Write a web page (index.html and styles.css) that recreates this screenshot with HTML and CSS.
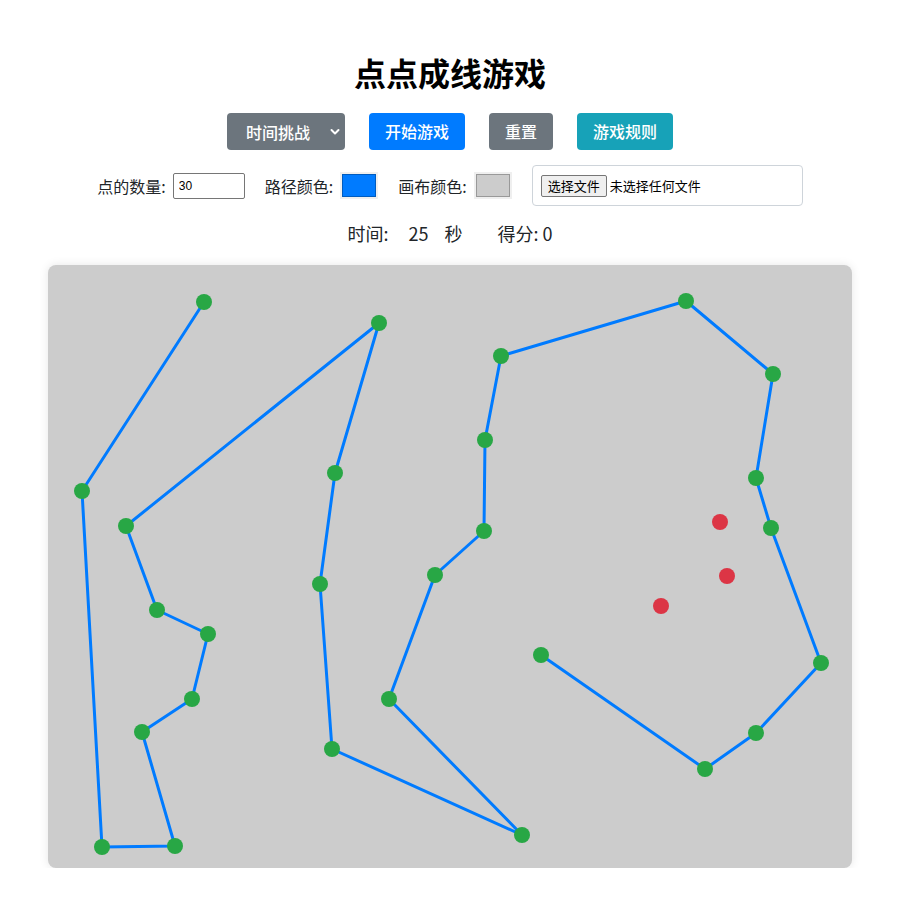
FILE: index.html
```html
<!DOCTYPE html>
<html lang="zh-CN">
<head>
<meta charset="utf-8">
<title>点点成线游戏</title>
<link rel="stylesheet" href="styles.css">
</head>
<body>
<div class="app">
  <h1 class="title">点点成线游戏</h1>
  <div class="toolbar">
    <div class="select-wrap">
      <select class="mode">
        <option>时间挑战</option>
        <option>自由模式</option>
      </select>
      <svg class="chev" width="10" height="8" viewBox="0 0 10 8"><path d="M1.5 2 L5 5.5 L8.5 2" fill="none" stroke="#fff" stroke-width="2" stroke-linecap="round" stroke-linejoin="round"/></svg>
    </div>
    <button class="btn btn-primary">开始游戏</button>
    <button class="btn btn-secondary">重置</button>
    <button class="btn btn-info">游戏规则</button>
  </div>
  <div class="controls">
    <label class="ctl"><span>点的数量:</span><input class="num" type="number" value="30"></label>
    <label class="ctl"><span>路径颜色:</span><input class="color" type="color" value="#007bff"></label>
    <label class="ctl"><span>画布颜色:</span><input class="color" type="color" value="#cccccc"></label>
    <label class="file"><span class="file-btn">选择文件</span><span class="file-name">未选择任何文件</span></label>
  </div>
  <div class="status">
    <span>时间:</span><span class="time">25</span><span class="unit">秒</span><span class="score">得分: 0</span>
  </div>
  <div class="board">
    <svg class="canvas" width="804" height="603" viewBox="0 0 804 603">
      <polyline fill="none" stroke="#007bff" stroke-width="3" stroke-linejoin="round" stroke-linecap="round"
        points="156,37 34,226 54,582 127,581 94,467 144,434 160,369 109,345 78,261 331,58 287,208 272,319 284,484 474,570 341,434 387,310 436,266 437,175 453,91 638,36 725,109 708,213 723,263 773,398 708,468 657,504 493,390"/>
      <g fill="#28a745">
        <circle cx="156" cy="37" r="8"/><circle cx="34" cy="226" r="8"/><circle cx="54" cy="582" r="8"/>
        <circle cx="127" cy="581" r="8"/><circle cx="94" cy="467" r="8"/><circle cx="144" cy="434" r="8"/>
        <circle cx="160" cy="369" r="8"/><circle cx="109" cy="345" r="8"/><circle cx="78" cy="261" r="8"/>
        <circle cx="331" cy="58" r="8"/><circle cx="287" cy="208" r="8"/><circle cx="272" cy="319" r="8"/>
        <circle cx="284" cy="484" r="8"/><circle cx="474" cy="570" r="8"/><circle cx="341" cy="434" r="8"/>
        <circle cx="387" cy="310" r="8"/><circle cx="436" cy="266" r="8"/><circle cx="437" cy="175" r="8"/>
        <circle cx="453" cy="91" r="8"/><circle cx="638" cy="36" r="8"/><circle cx="725" cy="109" r="8"/>
        <circle cx="708" cy="213" r="8"/><circle cx="723" cy="263" r="8"/><circle cx="773" cy="398" r="8"/>
        <circle cx="708" cy="468" r="8"/><circle cx="657" cy="504" r="8"/><circle cx="493" cy="390" r="8"/>
      </g>
      <g fill="#dc3545">
        <circle cx="672" cy="257" r="8"/><circle cx="679" cy="311" r="8"/><circle cx="613" cy="341" r="8"/>
      </g>
    </svg>
  </div>
</div>
</body>
</html>
```
FILE: styles.css
```css
* { box-sizing: border-box; }
body {
  margin: 0;
  background: #fff;
  color: #212529;
  font-family: "Noto Sans CJK SC", "Noto Sans", sans-serif;
}
.app {
  display: flex;
  flex-direction: column;
  align-items: center;
  padding-top: 53px;
}
.title {
  margin: 0;
  font-size: 32px;
  line-height: 38px;
  font-weight: 700;
  color: #000;
}
.toolbar {
  margin-top: 22px;
  display: flex;
  align-items: center;
  gap: 24px;
  height: 37px;
}
.select-wrap {
  position: relative;
  width: 118px;
  height: 37px;
  background: #6c757d;
  border-radius: 4px;
}
.mode {
  appearance: none;
  -webkit-appearance: none;
  width: 100%;
  height: 100%;
  border: none;
  background: transparent;
  color: #fff;
  font-family: inherit;
  font-size: 16px;
  font-weight: 500;
  padding: 0 0 0 19px;
  outline: none;
}
.chev {
  position: absolute;
  right: 5px;
  top: 15px;
  pointer-events: none;
}
.btn {
  height: 37px;
  padding: 0 16px;
  border: none;
  border-radius: 4px;
  color: #fff;
  font-family: inherit;
  font-size: 16px;
  font-weight: 500;
  line-height: 37px;
}
.btn-primary { background: #007bff; }
.btn-secondary { background: #6c757d; }
.btn-info { background: #17a2b8; }
.controls {
  margin-top: 15px;
  display: flex;
  align-items: center;
  height: 41px;
  font-size: 16px;
}
.ctl {
  display: flex;
  align-items: center;
  gap: 7px;
  margin-right: 20px;
  white-space: nowrap;
}
.num {
  width: 72px;
  height: 26px;
  border: 1px solid #767676;
  border-radius: 2px;
  padding: 0 5px;
  font-family: "Liberation Sans", sans-serif;
  font-size: 12px;
}
.color {
  flex: 0 0 38px;
  width: 38px;
  min-width: 38px;
  height: 27px;
  border: none;
  padding: 2px;
  background: #efefef;
  cursor: pointer;
}
.color::-webkit-color-swatch-wrapper { padding: 0; }
.color::-webkit-color-swatch { border: 1px solid rgba(0,0,0,0.25); border-radius: 0; }
.file {
  width: 271px;
  height: 41px;
  border: 1px solid #ced4da;
  border-radius: 4px;
  display: flex;
  align-items: center;
  padding-left: 8px;
  font-size: 13px;
}
.file-btn {
  height: 22px;
  padding: 0 6px;
  border: 1px solid #767676;
  border-radius: 2px;
  background: #efefef;
  line-height: 20px;
  margin-right: 3px;
  color: #000;
}
.file-name { color: #000; }
.status {
  margin-top: 14px;
  display: flex;
  align-items: center;
  height: 26px;
  font-size: 18px;
  color: #212529;
}
.time { margin-left: 20px; }
.unit { margin-left: 16px; }
.score { margin-left: 35px; }
.board {
  margin-top: 19px;
  width: 804px;
  height: 603px;
  background: #cccccc;
  border-radius: 8px;
  box-shadow: 0 0 10px rgba(0,0,0,0.1);
  overflow: hidden;
}
.canvas { display: block; }
```
